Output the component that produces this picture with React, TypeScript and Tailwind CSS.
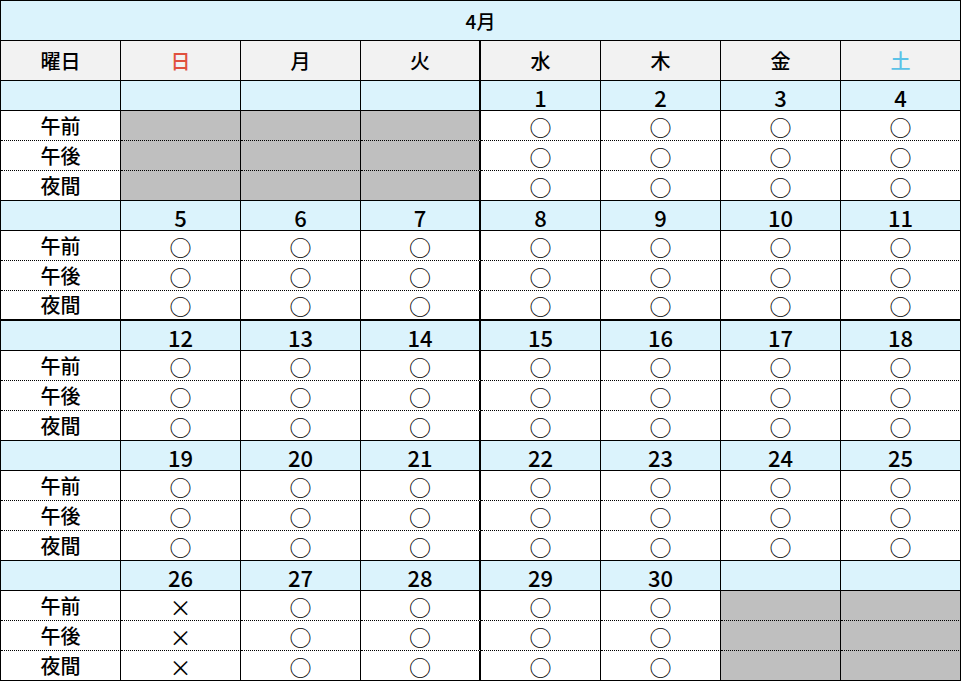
import React from "react";

type Mark = "o" | "x" | "gray";

const days = [
  { label: "日", color: "text-[#e0503e]" },
  { label: "月", color: "text-black" },
  { label: "火", color: "text-black" },
  { label: "水", color: "text-black" },
  { label: "木", color: "text-black" },
  { label: "金", color: "text-black" },
  { label: "土", color: "text-[#5bc2e7]" },
];

const slots = ["午前", "午後", "夜間"];

// dates per week, null = outside the month
const weeks: (number | null)[][] = [
  [null, null, null, 1, 2, 3, 4],
  [5, 6, 7, 8, 9, 10, 11],
  [12, 13, 14, 15, 16, 17, 18],
  [19, 20, 21, 22, 23, 24, 25],
  [26, 27, 28, 29, 30, null, null],
];

function markFor(date: number | null): Mark {
  if (date === null) return "gray";
  if (date === 26) return "x";
  return "o";
}

const font = { fontFamily: '"Noto Sans CJK JP", "Noto Sans", sans-serif' };

export default function App() {
  return (
    <div className="w-[961px] h-[681px] overflow-hidden bg-white text-black" style={font}>
      <div className="border-l border-t border-black w-[961px]">
        {/* title */}
        <div className="h-[40px] border-r border-b border-black bg-[#dbf3fc] flex items-center justify-center text-[19px] font-medium leading-none">
          4月
        </div>

        {/* weekday header */}
        <div className="flex h-[40px]">
          <div className="w-[120px] shrink-0 border-r border-b border-black bg-[#f2f2f2] flex items-center justify-center text-[20px] font-medium">
            曜日
          </div>
          {days.map((d, i) => (
            <div
              key={d.label}
              className={`w-[120px] shrink-0 border-b border-black bg-[#f2f2f2] flex items-center justify-center text-[20px] font-medium ${d.color} ${
                i === 2 ? "border-r-2" : "border-r"
              }`}
            >
              {d.label}
            </div>
          ))}
        </div>

        {weeks.map((week, wi) => (
          <div key={wi}>
            {/* date row */}
            <div className="flex h-[30px]">
              <div className="w-[120px] shrink-0 border-r border-b border-black bg-[#dbf3fc]" />
              {week.map((date, di) => (
                <div
                  key={di}
                  className={`w-[120px] shrink-0 border-b border-black bg-[#dbf3fc] flex items-center justify-center pt-[2px] text-[22px] font-medium leading-none ${
                    di === 2 ? "border-r-2" : "border-r"
                  }`}
                >
                  {date ?? ""}
                </div>
              ))}
            </div>

            {/* slot rows */}
            {slots.map((s, si) => {
              const last = si === slots.length - 1;
              const bottom = last
                ? wi === 1
                  ? "border-b-2 border-b-black"
                  : "border-b border-b-black"
                : "border-b border-b-black [border-bottom-style:dotted]";
              return (
                <div key={s} className="flex h-[30px]">
                  <div
                    className={`w-[120px] shrink-0 border-r border-r-black ${bottom} flex items-center justify-center text-[20px] font-medium leading-none`}
                  >
                    {s}
                  </div>
                  {week.map((date, di) => {
                    const m = markFor(date);
                    return (
                      <div
                        key={di}
                        className={`w-[120px] shrink-0 border-r-black ${
                          di === 2 ? "border-r-2" : "border-r"
                        } ${bottom} flex items-center justify-center text-[22px] leading-none ${
                          m === "gray" ? "bg-[#bfbfbf]" : ""
                        }`}
                      >
                        {m === "o" ? "○" : m === "x" ? "×" : ""}
                      </div>
                    );
                  })}
                </div>
              );
            })}
          </div>
        ))}
      </div>
    </div>
  );
}
